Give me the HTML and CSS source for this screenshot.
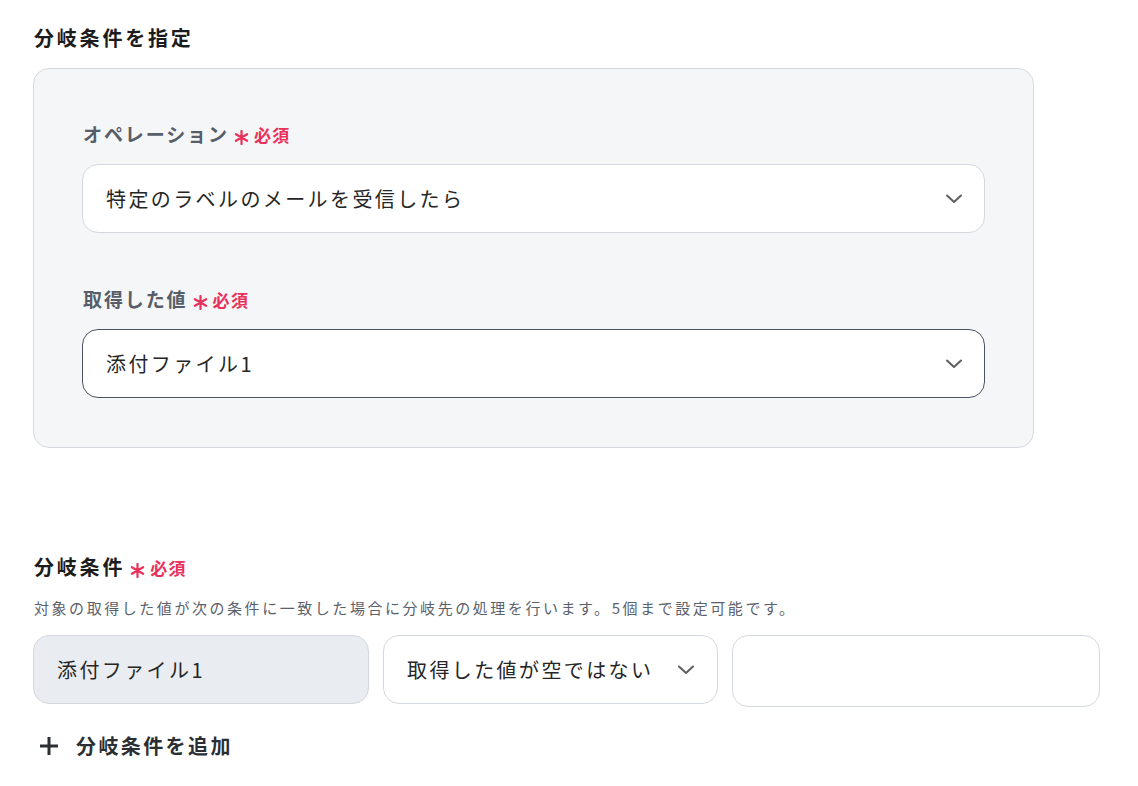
FILE: index.html
```html
<!DOCTYPE html>
<html lang="ja">
<head>
    <meta charset="UTF-8">
    <meta name="viewport" content="width=device-width, initial-scale=1.0">
    <title>分岐条件を指定</title>
    <link rel="stylesheet" href="styles.css">
</head>
<body>
    <div class="page">
        <h2 class="section-title">分岐条件を指定</h2>

        <div class="panel">
            <div class="field">
                <label class="field-label">オペレーション<span class="required"><svg class="star" width="15" height="15" viewBox="0 0 15 15"><path d="M7.5 1v13M1.9 4.25l11.2 6.5M1.9 10.75l11.2-6.5" stroke="#e8315b" stroke-width="2.2" stroke-linecap="round"/></svg>必須</span></label>
                <div class="select">
                    <span>特定のラベルのメールを受信したら</span>
                    <svg class="chevron" width="18" height="10" viewBox="0 0 18 10"><path d="M2 1.5 9 8l7-6.5" fill="none" stroke="#5f5f5f" stroke-width="2" stroke-linecap="round" stroke-linejoin="round"/></svg>
                </div>
            </div>

            <div class="field">
                <label class="field-label">取得した値<span class="required"><svg class="star" width="15" height="15" viewBox="0 0 15 15"><path d="M7.5 1v13M1.9 4.25l11.2 6.5M1.9 10.75l11.2-6.5" stroke="#e8315b" stroke-width="2.2" stroke-linecap="round"/></svg>必須</span></label>
                <div class="select active">
                    <span>添付ファイル1</span>
                    <svg class="chevron" width="18" height="10" viewBox="0 0 18 10"><path d="M2 1.5 9 8l7-6.5" fill="none" stroke="#5f5f5f" stroke-width="2" stroke-linecap="round" stroke-linejoin="round"/></svg>
                </div>
            </div>
        </div>

        <div class="conditions">
            <h2 class="section-title">分岐条件<span class="required"><svg class="star" width="15" height="15" viewBox="0 0 15 15"><path d="M7.5 1v13M1.9 4.25l11.2 6.5M1.9 10.75l11.2-6.5" stroke="#e8315b" stroke-width="2.2" stroke-linecap="round"/></svg>必須</span></h2>
            <p class="help">対象の取得した値が次の条件に一致した場合に分岐先の処理を行います。5個まで設定可能です。</p>

            <div class="condition-row">
                <div class="cond-box readonly">添付ファイル1</div>
                <div class="cond-box select">
                    <span>取得した値が空ではない</span>
                    <svg class="chevron" width="18" height="10" viewBox="0 0 18 10"><path d="M2 1.5 9 8l7-6.5" fill="none" stroke="#5f5f5f" stroke-width="2" stroke-linecap="round" stroke-linejoin="round"/></svg>
                </div>
                <input class="cond-input" type="text">
            </div>

            <button class="add-btn">
                <svg width="20" height="20" viewBox="0 0 20 20"><path d="M10 1v18M1 10h18" stroke="#2b2f33" stroke-width="3"/></svg>
                分岐条件を追加
            </button>
        </div>
    </div>
</body>
</html>
```

FILE: styles.css
```css
body {
    font-family: "Noto Sans CJK JP", "Noto Sans", sans-serif;
    background-color: #fff;
    color: #222;
    margin: 0;
    padding: 0;
}
.page {
    padding: 24px 33px 0 33px;
}
.section-title {
    margin: 0 0 16px 1px;
    font-size: 20px;
    line-height: 28px;
    font-weight: 700;
    letter-spacing: 0.14em;
    color: #1c1c1c;
}
.panel {
    width: 903px;
    background: #f5f6f8;
    border: 1px solid #d5d9df;
    border-radius: 16px;
    padding: 48px 48px 49px 48px;
}
.field {
    margin-bottom: 50px;
}
.field:last-child {
    margin-bottom: 0;
}
.field-label {
    display: block;
    font-size: 19px;
    line-height: 32px;
    font-weight: 700;
    letter-spacing: 0.1em;
    color: #575e68;
    margin: 1px 0 13px 1px;
}
.required {
    color: #e8315b;
    font-size: 17px;
    font-weight: 700;
    letter-spacing: 0.08em;
    margin-left: 5px;
}
.star {
    vertical-align: -3px;
    margin-right: 5px;
}
.select {
    display: flex;
    align-items: center;
    justify-content: space-between;
    height: 67px;
    padding: 0 21px 0 23px;
    background: #fff;
    border: 1px solid #d3d8df;
    border-radius: 16px;
    font-size: 20px;
    letter-spacing: 0.12em;
    color: #262626;
}
.select.active {
    border-color: #4a5363;
}
.conditions {
    margin-top: 105px;
}
.conditions .section-title {
    margin-bottom: 14px;
}
.help {
    margin: 0 0 15px 1px;
    font-size: 15px;
    line-height: 24px;
    letter-spacing: 0.17em;
    color: #5b616b;
}
.condition-row {
    display: grid;
    grid-template-columns: 336px 335px 368px;
    gap: 14px;
    align-items: start;
}
.cond-box {
    box-sizing: border-box;
    height: 69px;
    display: flex;
    align-items: center;
    padding: 0 22px 0 23px;
    border: 1px solid #d3d8df;
    border-radius: 16px;
    font-size: 20px;
    letter-spacing: 0.12em;
    color: #262626;
}
.cond-box.readonly {
    background: #e9ecf1;
}
.cond-input {
    box-sizing: border-box;
    height: 72px;
    border: 1px solid #d3d8df;
    border-radius: 16px;
    background: #fff;
    font: inherit;
    padding: 0 20px;
}
.add-btn {
    display: flex;
    align-items: center;
    gap: 17px;
    margin-top: 25px;
    padding: 0 0 0 6px;
    background: none;
    border: none;
    font-family: inherit;
    font-size: 20px;
    line-height: 28px;
    font-weight: 700;
    letter-spacing: 0.12em;
    color: #2b2f33;
    cursor: pointer;
}
```
